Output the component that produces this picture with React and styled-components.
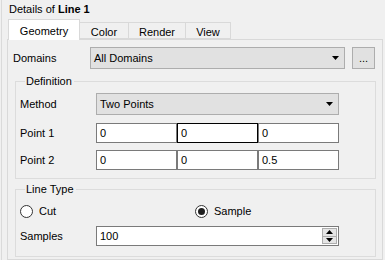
import React from "react";
import styled, { createGlobalStyle } from "styled-components";

const Global = createGlobalStyle`
  html, body { margin: 0; padding: 0; background: #f0f0f0; }
  body {
    font-family: "Liberation Sans", Arial, sans-serif;
    font-size: 11px;
    color: #000;
  }
  * { box-sizing: border-box; }
`;

const Window = styled.div`
  width: 385px;
  height: 260px;
  overflow: hidden;
  background: #f0f0f0;
  padding-top: 2px;
  border-left: 1px solid #dadada;
  margin-left: 1px;
`;

const Title = styled.div`
  line-height: 14px;
  height: 14px;
  padding-left: 7px;
  margin-bottom: 3px;
  b { font-weight: bold; }
`;

const TabBar = styled.div`
  display: flex;
  align-items: flex-end;
  margin-left: 6px;
  height: 20px;
  position: relative;
  z-index: 1;
`;

const Tab = styled.div`
  height: ${(p) => (p.$active ? "21px" : "17px")};
  padding: ${(p) => (p.$active ? "4px" : "2px")} 0 0;
  width: ${(p) => p.$w}px;
  text-align: center;
  line-height: 14px;
  background: ${(p) => (p.$active ? "#ffffff" : "#f0f0f0")};
  border: 1px solid #d9d9d9;
  border-bottom: ${(p) => (p.$active ? "none" : "1px solid #d9d9d9")};
  margin-left: ${(p) => (p.$first ? "0" : "-1px")};
  position: relative;
  z-index: ${(p) => (p.$active ? 2 : 1)};
  align-self: flex-end;
  margin-bottom: ${(p) => (p.$active ? "-1px" : "0")};
`;

const Pane = styled.div`
  margin-left: 5px;
  width: 376px;
  height: 221px;
  border: 1px solid #d9d9d9;
  padding: 7px 0 0 5px;
  display: flex;
  flex-direction: column;
`;

const Row = styled.div`
  display: flex;
  align-items: center;
  gap: ${(p) => p.$gap || 0}px;
  margin-top: ${(p) => p.$mt || 0}px;
`;

const Label = styled.div`
  width: ${(p) => p.$w}px;
  flex: none;
  line-height: 14px;
`;

const Combo = styled.div`
  width: ${(p) => p.$w}px;
  height: 22px;
  flex: none;
  background: #e1e1e1;
  border: 1px solid #adadad;
  display: flex;
  align-items: center;
  justify-content: space-between;
  padding: 0 5px 0 3px;
  line-height: 14px;
`;

const Arrow = () => (
  <svg width="7" height="4" viewBox="0 0 7 4">
    <path d="M0 0H7L3.5 4Z" fill="#000" />
  </svg>
);

const DotsButton = styled.div`
  width: 23px;
  height: 22px;
  flex: none;
  background: #e1e1e1;
  border: 1px solid #adadad;
  text-align: center;
  line-height: 20px;
`;

const Group = styled.fieldset`
  margin: ${(p) => p.$mt}px 0 0 2px;
  width: 361px;
  min-width: 0;
  border: 1px solid #dcdcdc;
  padding: ${(p) => p.$pt}px 0 ${(p) => p.$pb}px 4px;
  display: flex;
  flex-direction: column;
  gap: ${(p) => p.$gap}px;
`;

const Legend = styled.legend`
  padding: 0 2px 0 1px;
  margin-left: 5px;
  line-height: 14px;
`;

const Field = styled.div`
  width: 81px;
  height: 20px;
  flex: none;
  background: #fff;
  border: 1px solid ${(p) => (p.$focus ? "#000" : "#7a7a7a")};
  padding-left: 3px;
  line-height: 18px;
`;

const RadioGrid = styled.div`
  display: grid;
  grid-template-columns: 175px 1fr;
  height: 14px;
  align-items: center;
`;

const Radio = styled.div`
  display: flex;
  align-items: center;
  gap: 6px;
  line-height: 14px;
`;

const Circle = styled.span`
  width: 13px;
  height: 13px;
  border-radius: 50%;
  border: 1px solid #333;
  background: #fff;
  display: flex;
  align-items: center;
  justify-content: center;
  &::after {
    content: "";
    display: ${(p) => (p.$on ? "block" : "none")};
    width: 7px;
    height: 7px;
    border-radius: 50%;
    background: #1f1f1f;
  }
`;

const Spin = styled.div`
  width: 243px;
  height: 20px;
  background: #fff;
  border: 1px solid #7a7a7a;
  display: flex;
  align-items: center;
  justify-content: space-between;
  padding: 0 1px 0 3px;
  line-height: 18px;
`;

const SpinButtons = styled.div`
  display: flex;
  flex-direction: column;
  width: 15px;
  height: 16px;
`;

const SpinBtn = styled.div`
  flex: 1;
  background: #e5e5e5;
  border: 1px solid #adadad;
  margin-top: ${(p) => (p.$down ? "-1px" : "0")};
  display: flex;
  align-items: center;
  justify-content: center;
`;

const SmallTri = ({ up }) => (
  <svg width="7" height="4" viewBox="0 0 7 4">
    <path d={up ? "M0 4H7L3.5 0Z" : "M0 0H7L3.5 4Z"} fill="#000" />
  </svg>
);

export default function App() {
  return (
    <>
      <Global />
      <Window>
        <Title>
          Details of <b>Line 1</b>
        </Title>
        <TabBar>
          <Tab $active $first $w={72}>Geometry</Tab>
          <Tab $w={50}>Color</Tab>
          <Tab $w={58}>Render</Tab>
          <Tab $w={46}>View</Tab>
        </TabBar>
        <Pane>
          <Row $gap={7}>
            <Row>
              <Label $w={77}>Domains</Label>
              <Combo $w={255}>
                <span>All Domains</span>
                <Arrow />
              </Combo>
            </Row>
            <DotsButton>...</DotsButton>
          </Row>

          <Group $mt={5} $pt={5} $pb={8} $gap={0}>
            <Legend>Definition</Legend>
            <Row>
              <Label $w={76}>Method</Label>
              <Combo $w={243}>
                <span>Two Points</span>
                <Arrow />
              </Combo>
            </Row>
            <Row $mt={8}>
              <Label $w={76}>Point 1</Label>
              <Field>0</Field>
              <Field $focus>0</Field>
              <Field>0</Field>
            </Row>
            <Row $mt={7}>
              <Label $w={76}>Point 2</Label>
              <Field>0</Field>
              <Field>0</Field>
              <Field>0.5</Field>
            </Row>
          </Group>

          <Group $mt={3} $pt={8} $pb={10} $gap={8}>
            <Legend>Line Type</Legend>
            <RadioGrid>
              <Radio>
                <Circle />
                Cut
              </Radio>
              <Radio>
                <Circle $on />
                Sample
              </Radio>
            </RadioGrid>
            <Row>
              <Label $w={76}>Samples</Label>
              <Spin>
                <span>100</span>
                <SpinButtons>
                  <SpinBtn>
                    <SmallTri up />
                  </SpinBtn>
                  <SpinBtn $down>
                    <SmallTri />
                  </SpinBtn>
                </SpinButtons>
              </Spin>
            </Row>
          </Group>
        </Pane>
      </Window>
    </>
  );
}
